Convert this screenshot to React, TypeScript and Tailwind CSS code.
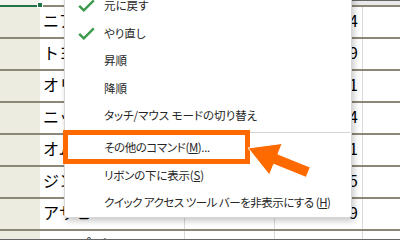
import React from "react";

const rows = [
  { name: "ニアコーポ", c: "", d: "4" },
  { name: "トヨタ", c: "", d: "9" },
  { name: "オリンパス", c: "", d: "1" },
  { name: "ニッスイ", c: "", d: "4" },
  { name: "オムロン", c: "", d: "1" },
  { name: "ジンズ", c: "", d: "5" },
  { name: "アサヒ", c: "", d: "9" },
  { name: "トップバリュ", c: "1,722", d: "1,100" },
];

const jp = "font-['Noto_Sans_CJK_JP','Noto_Sans',sans-serif]";

function Check() {
  return (
    <svg width="17" height="13" viewBox="0 0 17 13" className="ml-[13px] shrink-0">
      <polyline
        points="1.2,6.8 5.8,11.4 15.8,1.4"
        fill="none"
        stroke="#3d9a4c"
        strokeWidth="2.4"
      />
    </svg>
  );
}

function Item({
  label,
  check,
  u,
  after,
  tight,
}: {
  label: string;
  check?: boolean;
  u?: string;
  after?: string;
  tight?: string;
}) {
  return (
    <div className="flex h-[27.5px] items-center">
      <div className="flex w-[39px] items-center">{check && <Check />}</div>
      <span className={`whitespace-nowrap text-[11.5px] text-[#262626] [font-feature-settings:'palt'] ${tight ?? ""}`}>
        {label}
        {u && (
          <>
            (<u>{u}</u>)
          </>
        )}
        {after}
      </span>
    </div>
  );
}

export default function App() {
  return (
    <div className={`relative h-[240px] w-[400px] overflow-hidden bg-white ${jp}`}>
      {/* header strip */}
      <div className="flex h-[5px]">
        <div className="w-[40px] bg-[#f3f3ee]" />
        <div className="w-[145px] bg-white" />
        <div className="flex-1 bg-[#e9e9e9]" />
      </div>

      {rows.map((r, i) => (
        <div key={i} className="flex h-[32px] border-t-2 border-[#8c8878]">
          <div className={`w-[40px] bg-[#ecece0] ${i === 0 ? "-mt-[2px] border-t-2 border-[#217346]" : ""}`} />
          <div className="w-[145px] overflow-hidden whitespace-nowrap border-r border-[#d9d9d9] pl-[3px] text-[16px] leading-[26px] text-black">
            {r.name}
          </div>
          <div className="w-[90px] border-r border-[#d9d9d9] pr-[3px] text-right text-[16px] leading-[26px] text-black">
            {r.c}
          </div>
          <div className="w-[88px] border-r border-[#d9d9d9] pr-[4px] text-right text-[16px] leading-[26px] text-black">
            {r.d}
          </div>
          <div className="flex-1" />
        </div>
      ))}

      <div className="absolute bottom-0 left-0 h-px w-full bg-[#666]" />
      <div className="absolute left-[190px] top-0 h-px w-[210px] bg-[#666]" />

      {/* fill handle */}
      <div className="absolute left-[37px] top-[2px] h-[6px] w-[6px] border border-white bg-[#217346]" />

      {/* menu */}
      <div className="absolute left-[64px] top-[-9px] w-[288px] rounded-[3px] border border-[#d6d6d6] bg-white shadow-[2px_3px_6px_rgba(0,0,0,0.22)]">
        <Item label="元に戻す" check />
        <Item label="やり直し" check />
        <Item label="昇順" />
        <Item label="降順" />
        <Item label="タッチ/マウス モードの切り替え" />
        <div className="mx-[1px] mb-[1.5px] mt-[2px] h-px bg-[#d4d4d4]" />
        <Item label="その他のコマンド" u="M" after="..." tight="tracking-[-0.4px]" />
        <Item label="リボンの下に表示" u="S" tight="tracking-[-0.2px]" />
        <Item label="クイック アクセス ツール バーを非表示にする " u="H" tight="tracking-[-0.5px]" />
      </div>

      {/* highlight box */}
      <div className="absolute left-[63px] top-[130px] h-[34px] w-[187px] border-[5px] border-[#ff6a00]" />

      <svg className="pointer-events-none absolute left-0 top-0" width="400" height="240">
        <polygon
          points="248,148 282.2,143.4 277.9,154.1 310.3,167.2 306.1,177.4 273.7,164.3 269.4,175"
          fill="#ff6a00"
          stroke="#ffffff"
          strokeWidth="1"
          strokeLinejoin="round"
        />
      </svg>
    </div>
  );
}
